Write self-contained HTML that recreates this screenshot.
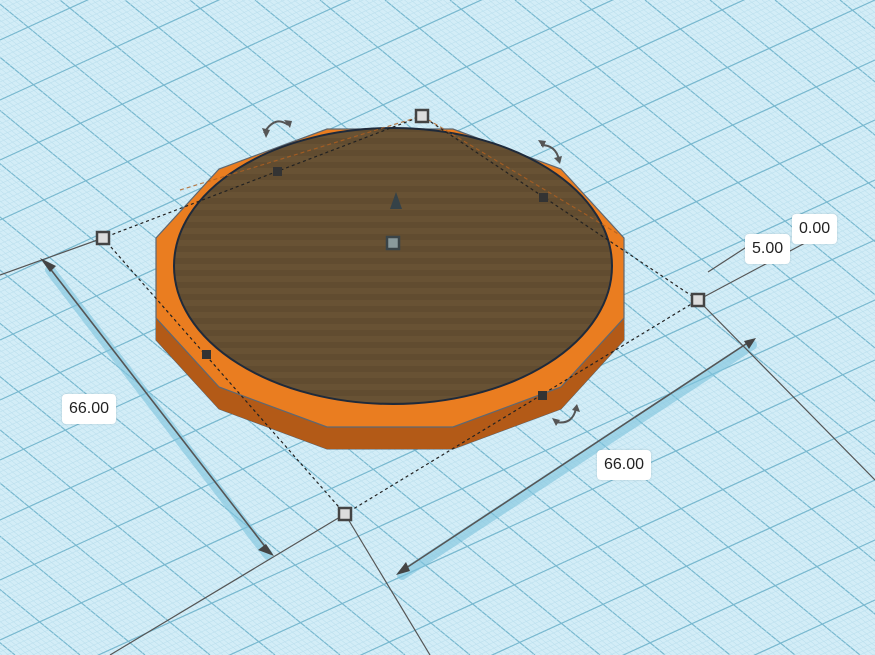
<!DOCTYPE html>
<html><head><meta charset="utf-8"><style>
html,body{margin:0;padding:0;width:875px;height:655px;overflow:hidden;background:#d3edf7}
.lbl{position:absolute;background:#fff;border-radius:4px;font:16px "Liberation Sans",sans-serif;color:#222;padding:6px 7px;box-shadow:0 0 2px rgba(0,0,0,.15)}
</style></head><body>
<svg id="s" width="875" height="655" style="position:absolute;left:0;top:0">
<g id="grid"></g>
<g stroke="#7ec4de" stroke-width="10" opacity="0.6" stroke-linecap="round">
<line x1="50" y1="270" x2="268" y2="555"/>
<line x1="402" y1="575" x2="752" y2="345"/>
</g>
<g stroke="#555" stroke-width="1.2" fill="none">
<line x1="0" y1="275" x2="103" y2="238"/>
<line x1="110" y1="655" x2="345" y2="514"/>
<line x1="345" y1="514" x2="430" y2="655"/>
<line x1="698" y1="300" x2="875" y2="480"/>
<line x1="698" y1="300" x2="820" y2="235"/>
<line x1="45" y1="262" x2="270" y2="553" stroke-width="1.6"/>
<line x1="400" y1="572" x2="752" y2="340" stroke-width="1.6"/>
<line x1="708" y1="272" x2="765" y2="235"/>
</g>
<g fill="#444">
<polygon points="40,258 56,266 50,272"/>
<polygon points="274,556 258,550 266,544"/>
<polygon points="396,575 406,562 410,571"/>
<polygon points="756,338 744,341 749,349"/>
</g>
<path d="M156,238 L156,260 L156,340 L219,409 L327,449 L453,449 L561,409 L624,340 L624,260 L624,238 Z" fill="#a95616" stroke="#56606a" stroke-width="1"/>
<polygon points="156,318 219,387 327,427 453,427 561,387 624,318 624,340 561,409 453,449 327,449 219,409 156,340" fill="#b35a17"/>
<polygon points="624,318 561,387 453,427 327,427 219,387 156,318 156,238 219,169 327,129 453,129 561,169 624,238" fill="#ea7d20" stroke="#5e6872" stroke-width="1.2"/>
<defs><pattern id="st" width="10" height="12" patternUnits="userSpaceOnUse"><rect width="10" height="12" fill="#685234"/><rect y="6" width="10" height="6" fill="#614c30"/></pattern></defs>
<ellipse cx="393" cy="266" rx="219" ry="138" fill="url(#st)" stroke="#1f2a3a" stroke-width="2"/>
<g stroke="#222" stroke-width="1.2" stroke-dasharray="3,3" fill="none">
<polyline points="103,238 345,514 698,300 422,116 103,238"/>
</g>
<g stroke="#b06020" stroke-width="1.2" stroke-dasharray="4,3" fill="none" opacity=".8">
<line x1="180" y1="190" x2="422" y2="116"/><line x1="422" y1="116" x2="620" y2="235"/>
</g>
<g fill="#333">
<rect x="273" y="167" width="9" height="9"/><rect x="539" y="193" width="9" height="9"/>
<rect x="202" y="350" width="9" height="9"/><rect x="538" y="391" width="9" height="9"/>
</g>
<g fill="#ddd" stroke="#444" stroke-width="2.5">
<rect x="97" y="232" width="12" height="12"/><rect x="416" y="110" width="12" height="12"/>
<rect x="692" y="294" width="12" height="12"/><rect x="339" y="508" width="12" height="12"/>
</g>
<rect x="387" y="237" width="12" height="12" fill="#8a9a9c" stroke="#3a4448" stroke-width="2.5"/>
<polygon points="396,192 390,209 402,209" fill="#354248"/>
<g stroke="#555" stroke-width="2" fill="none">
<path d="M264,133 Q275,115 288,125"/><path d="M541,145 Q556,145 559,160"/><path d="M556,422 Q573,425 576,408"/>
</g>
<g fill="#555">
<polygon points="262,128 266,138 270,130"/><polygon points="284,120 290,128 292,121"/>
<polygon points="538,140 543,148 546,141"/><polygon points="554,158 560,164 562,156"/>
<polygon points="552,418 556,426 560,420"/><polygon points="572,410 577,404 580,412"/>
</g>
</svg>
<div class="lbl" style="left:62px;top:394px">66.00</div>
<div class="lbl" style="left:597px;top:450px">66.00</div>
<div class="lbl" style="left:792px;top:214px">0.00</div>
<div class="lbl" style="left:745px;top:234px">5.00</div>
<script>
var g=document.getElementById('grid'),h='';
function L(x1,y1,x2,y2,c,w){h+='<line x1="'+x1+'" y1="'+y1+'" x2="'+x2+'" y2="'+y2+'" stroke="'+c+'" stroke-width="'+w+'"/>';}
for(var i=-1500;i<1500;i+=6.5){var maj=Math.round((i+1500)/6.5)%10==0;
 L(i,0,i+800,655,maj?'#78b8cf':'#bde0ee',maj?1.2:0.6);}
for(var j=-800;j<1400;j+=6){var maj2=Math.round((j+800)/6)%10==0;
 L(0,j,875,j-400,maj2?'#78b8cf':'#bde0ee',maj2?1.2:0.6);}
g.innerHTML=h;
</script>
</body></html>
